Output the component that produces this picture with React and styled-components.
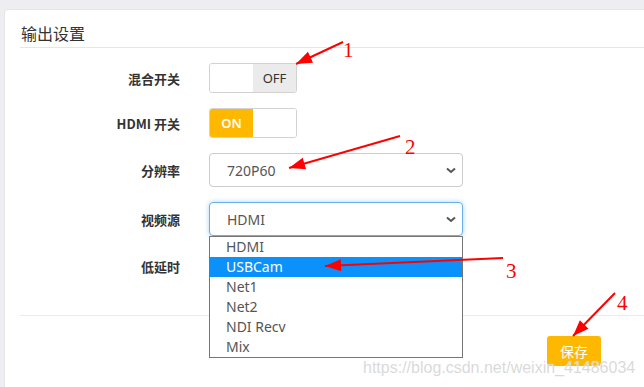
import React from "react"
import styled, { createGlobalStyle } from "styled-components"

const GlobalStyle = createGlobalStyle`
  html, body {
    margin: 0;
    padding: 0;
    background: #eeeef2;
    font-family: "Noto Sans", "Noto Sans CJK SC", sans-serif;
    overflow: hidden;
  }
`

const Page = styled.div`
  position: relative;
  width: 644px;
  height: 387px;
  padding: 9px 0 0 4px;
  box-sizing: border-box;
  overflow: hidden;
`

const Card = styled.div`
  width: 720px;
  height: 420px;
  box-sizing: border-box;
  background: #fff;
  border: 1px solid #e6e6e6;
  border-radius: 4px;
  padding-left: 15px;
`

const Header = styled.div`
  padding: 13px 0 2px 1px;
  line-height: 22px;
  font-size: 16px;
  color: #333;
  border-bottom: 1px solid #e6e6e6;
`

const Form = styled.div`
  padding-top: 15px;
`

const Row = styled.div`
  display: grid;
  grid-template-columns: 160px 254px;
  column-gap: 29px;
  align-items: center;
  margin-bottom: ${(p) => (p.last ? "0" : "15px")};
`

const Label = styled.label`
  text-align: right;
  font-size: 13px;
  font-weight: 700;
  color: #333;
  font-family: "Noto Sans CJK SC", "Noto Sans", sans-serif;
`

const Switch = styled.div`
  display: flex;
  width: 88px;
  height: 30px;
  box-sizing: border-box;
  border: 1px solid #d2d2d2;
  border-radius: 3px;
  overflow: hidden;
`

const Half = styled.span`
  flex: 1;
  display: flex;
  align-items: center;
  justify-content: center;
  font-size: 13px;
  font-family: "Noto Sans", sans-serif;
  background: ${(p) => (p.fill ? p.fill : "#fff")};
  color: ${(p) => (p.light ? "#fff" : "#333")};
  font-weight: ${(p) => (p.light ? 600 : 400)};
`

const SelectWrap = styled.div`
  position: relative;
  width: 254px;
`

const SelectBox = styled.div`
  display: flex;
  align-items: center;
  justify-content: space-between;
  height: 34px;
  box-sizing: border-box;
  padding: 0 6px 0 17px;
  border: 1px solid ${(p) => (p.focus ? "#66afe9" : "#ccc")};
  border-radius: 4px;
  box-shadow: ${(p) => (p.focus ? "0 0 5px rgba(102,175,233,.55)" : "none")};
  font-size: 14px;
  color: #555;
  font-family: "Noto Sans", sans-serif;
`

const Options = styled.ul`
  position: absolute;
  top: 34px;
  left: 0;
  width: 254px;
  box-sizing: border-box;
  margin: 0;
  padding: 0;
  list-style: none;
  background: #fff;
  border: 1px solid #767676;
  z-index: 2;
`

const Option = styled.li`
  height: 20px;
  line-height: 20px;
  padding-left: 16px;
  font-size: 14px;
  font-family: "Noto Sans", sans-serif;
  color: ${(p) => (p.active ? "#fff" : "#555")};
  background: ${(p) => (p.active ? "#0b91fb" : "transparent")};
`

const Footer = styled.div`
  margin-top: 34px;
  padding-top: 20px;
  border-top: 1px solid #eaeaea;
`

const SaveButton = styled.button`
  margin-left: 527px;
  width: 54px;
  height: 30px;
  border: none;
  border-radius: 3px;
  background: #ffb800;
  color: #fff;
  font-size: 14px;
  font-family: "Noto Sans CJK SC", sans-serif;
  padding: 0;
`

const Overlay = styled.svg`
  position: absolute;
  left: 0;
  top: 0;
  pointer-events: none;
  z-index: 5;
`

const Watermark = styled.span`
  position: absolute;
  left: 363px;
  top: 359px;
  font-family: "Liberation Sans", Arial, sans-serif;
  font-size: 16px;
  color: rgba(205, 205, 205, 0.75);
  text-shadow: 0 0 1px #fff;
  z-index: 6;
`

const Chevron = () => (
  <svg width="10" height="7" viewBox="0 0 10 7">
    <path d="M1 1.5 L5 5 L9 1.5" fill="none" stroke="#555" strokeWidth="2" />
  </svg>
)

const Toggle = ({ on }) => (
  <Switch>
    {on ? (
      <>
        <Half fill="#ffb800" light>ON</Half>
        <Half />
      </>
    ) : (
      <>
        <Half />
        <Half fill="#ebebeb">OFF</Half>
      </>
    )}
  </Switch>
)

const arrows = [
  { from: [343, 42], to: [296, 64], n: "1", at: [343, 57] },
  { from: [400, 136], to: [289, 168], n: "2", at: [405, 154] },
  { from: [503, 258], to: [325, 266], n: "3", at: [506, 278] },
  { from: [615, 293], to: [573, 336], n: "4", at: [617, 310] },
]

const head = ([x1, y1], [x2, y2]) => {
  const dx = x2 - x1
  const dy = y2 - y1
  const len = Math.hypot(dx, dy)
  const ux = dx / len
  const uy = dy / len
  const bx = x2 - ux * 16
  const by = y2 - uy * 16
  const w = 6
  return `${x2},${y2} ${bx - uy * w},${by + ux * w} ${bx + uy * w},${by - ux * w}`
}

const sources = ["HDMI", "USBCam", "Net1", "Net2", "NDI Recv", "Mix"]

export default function App() {
  return (
    <Page>
      <GlobalStyle />
      <Card>
        <Header>输出设置</Header>
        <Form>
          <Row>
            <Label>混合开关</Label>
            <Toggle />
          </Row>
          <Row>
            <Label>HDMI 开关</Label>
            <Toggle on />
          </Row>
          <Row>
            <Label>分辨率</Label>
            <SelectWrap>
              <SelectBox>
                720P60
                <Chevron />
              </SelectBox>
            </SelectWrap>
          </Row>
          <Row>
            <Label>视频源</Label>
            <SelectWrap>
              <SelectBox focus>
                HDMI
                <Chevron />
              </SelectBox>
              <Options>
                {sources.map((s) => (
                  <Option key={s} active={s === "USBCam"}>
                    {s}
                  </Option>
                ))}
              </Options>
            </SelectWrap>
          </Row>
          <Row last>
            <Label>低延时</Label>
            <Toggle />
          </Row>
        </Form>
        <Footer>
          <SaveButton>保存</SaveButton>
        </Footer>
      </Card>
      <Overlay width="644" height="387">
        {arrows.map((a) => (
          <g key={a.n}>
            <line
              x1={a.from[0]}
              y1={a.from[1]}
              x2={a.to[0]}
              y2={a.to[1]}
              stroke="#ff0000"
              strokeWidth="2"
            />
            <polygon points={head(a.from, a.to)} fill="#ff0000" />
            <text
              x={a.at[0]}
              y={a.at[1]}
              fill="#ff0000"
              fontSize="21"
              fontFamily="Liberation Serif, serif"
            >
              {a.n}
            </text>
          </g>
        ))}
      </Overlay>
      <Watermark>https://blog.csdn.net/weixin_41486034</Watermark>
    </Page>
  )
}
